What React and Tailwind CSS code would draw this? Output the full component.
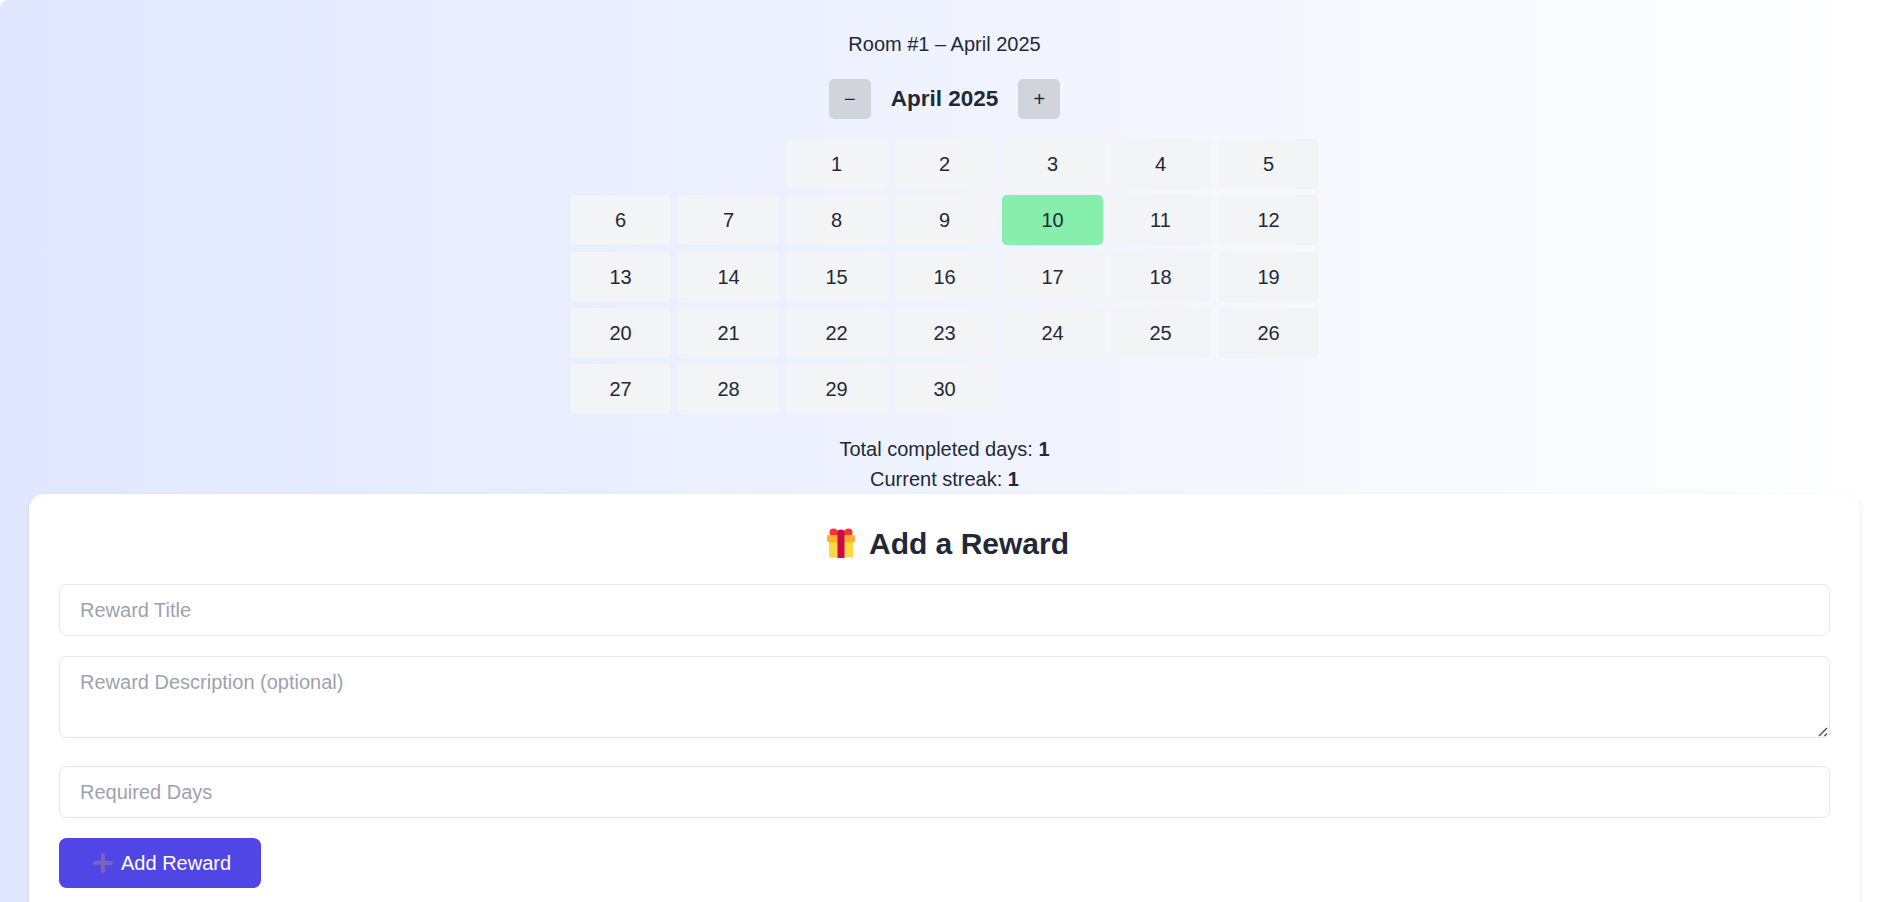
const DAYS = Array.from({ length: 30 }, (_, i) => i + 1);
const COMPLETED = [10];

const fieldClass =
  'block w-full border border-[#e5e7eb] rounded-[7.5px] px-5 py-2.5 text-[20px] leading-[30px] placeholder:text-[#9ca3af]';

function GiftIcon() {
  return (
    <svg viewBox="0 0 28 31" className="w-[28px] h-[31px] mb-px">
      <path d="M2 12h24v16a1.500 1.500 0 0 1-1.500 1.500h-21A1.500 1.500 0 0 1 2 28z" fill="#ffd740" />
      <path d="M2 13h24v2H2z" fill="#fcc62f" />
      <circle cx="6.500" cy="4.500" r="4" fill="#fb3034" />
      <circle cx="21.500" cy="4.500" r="4" fill="#fb3034" />
      <rect x="6" y="2.500" width="16" height="5" fill="#fb3034" />
      <rect x="0" y="7" width="28" height="7" rx="1.500" fill="#ffb02e" />
      <path d="M10.500 4.500a3.500 3 0 0 1 7 0V30h-7z" fill="#ca0b4a" />
    </svg>
  );
}

function PlusIcon() {
  return (
    <svg viewBox="0 0 20 20" className="w-5 h-5">
      <path d="M10 2v16M2 10h16" stroke="#7d62c4" strokeWidth="4" strokeLinecap="round" />
    </svg>
  );
}

function ResizeGrip() {
  return (
    <svg viewBox="0 0 10 10" className="absolute right-[2px] bottom-[1px] w-[10px] h-[10px]">
      <path d="M1 9l8-8M6.500 9L9 6.500" stroke="#555" strokeWidth="1.500" />
    </svg>
  );
}

function MonthButton({ children }) {
  return (
    <button className="w-[42px] h-10 rounded-[5px] bg-[#d1d5db] text-[20px] leading-[30px] flex items-center justify-center">
      {children}
    </button>
  );
}

function Calendar() {
  return (
    <div className="w-[749px] mx-auto grid grid-cols-7 gap-x-[7px] gap-y-[6.25px]">
      <div className="col-span-2" />
      {DAYS.map((day) => (
        <div
          key={day}
          className={`h-[50px] rounded-[5px] flex items-center justify-center ${
            COMPLETED.includes(day) ? 'bg-[#86efac]' : 'bg-[#f3f4f6]'
          }`}
        >
          {day}
        </div>
      ))}
    </div>
  );
}

function RewardForm() {
  return (
    <form className="bg-white rounded-[15px] shadow-[0_2.5px_5px_rgba(0,0,0,0.1)] h-[560px] px-[30px] pt-[30px]">
      <h2 className="flex items-center justify-center gap-[14px] h-10 mb-5 pl-[7px] text-[30px] font-bold">
        <GiftIcon />
        Add a Reward
      </h2>
      <input className={`${fieldClass} h-[52px] mb-5`} placeholder="Reward Title" />
      <div className="relative mb-7">
        <textarea className={`${fieldClass} h-[82px] resize-none`} placeholder="Reward Description (optional)" />
        <ResizeGrip />
      </div>
      <input className={`${fieldClass} h-[52px] mb-5`} placeholder="Required Days" />
      <button
        type="button"
        className="w-[202px] h-[50px] rounded-[7.5px] bg-[#4f46e5] text-white flex items-center pl-[34px] gap-2"
      >
        <PlusIcon />
        Add Reward
      </button>
    </form>
  );
}

export default function App() {
  return (
    <div className="h-[902px] overflow-hidden rounded-tl-[8px] bg-linear-to-r/srgb from-[#e0e7ff] to-white pl-[29px] pr-[28px] pt-[29px] font-['Liberation_Sans',Arial,sans-serif] text-[20px] leading-[30px] text-[#1f2937]">
      <p className="text-center mb-5">Room #1 – April 2025</p>
      <div className="flex items-center justify-center gap-5 mb-5">
        <MonthButton>−</MonthButton>
        <h1 className="text-[22.500px] font-bold">April 2025</h1>
        <MonthButton>+</MonthButton>
      </div>
      <Calendar />
      <div className="mt-5 text-center">
        <p>
          Total completed days: <strong>1</strong>
        </p>
        <p>
          Current streak: <strong>1</strong>
        </p>
      </div>
      <RewardForm />
    </div>
  );
}
